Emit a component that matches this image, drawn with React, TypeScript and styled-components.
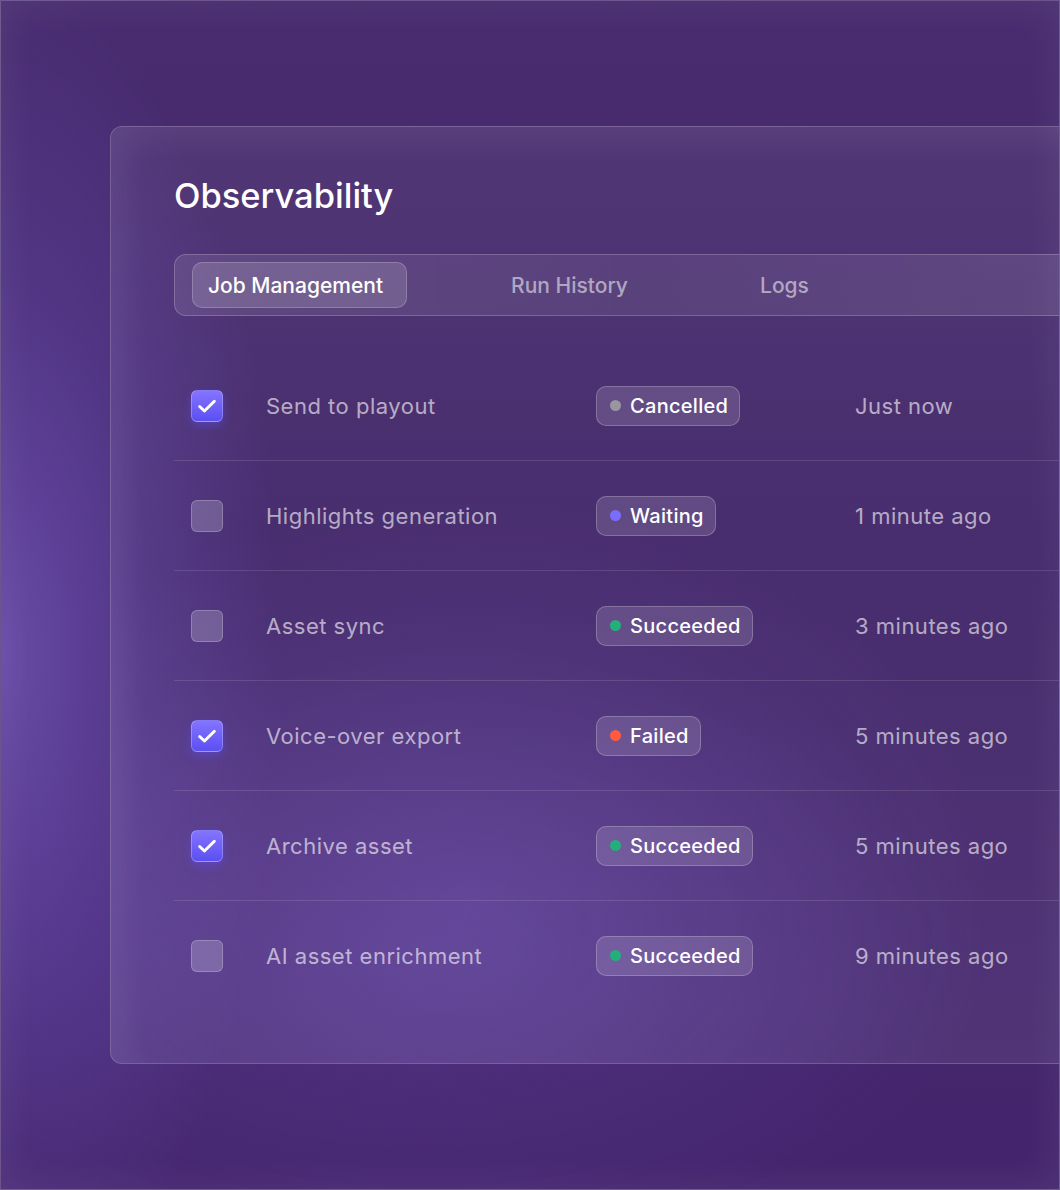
import React from 'react';
import styled, { createGlobalStyle } from 'styled-components';

const GlobalStyle = createGlobalStyle`
  html, body {
    margin: 0;
    padding: 0;
    background: #44266c;
  }
  body {
    font-family: Inter, 'Noto Sans', sans-serif;
  }
`;

const Frame = styled.div`
  width: 1060px;
  height: 1190px;
  box-sizing: border-box;
  overflow: hidden;
  border: 1px solid rgba(255, 255, 255, 0.22);
  padding: 125px 0 0 109px;
  background:
    radial-gradient(ellipse 280px 680px at 0% 55%, rgba(114, 84, 182, 0.8) 0%, rgba(100, 72, 168, 0.4) 55%, transparent 100%),
    radial-gradient(ellipse 560px 300px at 40% 80%, rgba(96, 66, 160, 0.45) 0%, transparent 100%),
    linear-gradient(180deg, #482c6f 0%, #42266a 50%, #44256d 100%);
  box-shadow: inset 0 0 40px rgba(255, 255, 255, 0.08);
`;

const Card = styled.div`
  width: 1000px;
  height: 938px;
  box-sizing: border-box;
  border: 1px solid rgba(255, 255, 255, 0.2);
  border-radius: 12px;
  padding: 48px 0 0 63px;
  background:
    radial-gradient(ellipse 520px 420px at 36% 84%, rgba(125, 95, 195, 0.3) 0%, transparent 100%),
    linear-gradient(180deg, rgba(255, 255, 255, 0.06) 0%, rgba(255, 255, 255, 0.03) 45%, rgba(255, 255, 255, 0.07) 100%);
  box-shadow: inset 16px 12px 30px rgba(255, 255, 255, 0.06);
`;

const Title = styled.h1`
  margin: 0;
  font-size: 34.5px;
  line-height: 42px;
  font-weight: 500;
  color: #ffffff;
`;

const TabBar = styled.div`
  margin-top: 37px;
  height: 62px;
  box-sizing: border-box;
  display: flex;
  align-items: center;
  padding-left: 17px;
  border: 1px solid rgba(255, 255, 255, 0.2);
  border-radius: 12px;
  background: linear-gradient(90deg, rgba(255, 255, 255, 0.1), rgba(255, 255, 255, 0.07) 50%, rgba(255, 255, 255, 0.1));
`;

const Tab = styled.div<{ $active?: boolean; $width: number; $gap: number }>`
  width: ${p => p.$width}px;
  margin-left: ${p => p.$gap}px;
  height: 46px;
  box-sizing: border-box;
  display: flex;
  align-items: center;
  justify-content: center;
  padding-right: ${p => (p.$active ? 8 : 0)}px;
  border-radius: 10px;
  font-size: 21px;
  font-weight: 500;
  color: ${p => (p.$active ? '#ffffff' : 'rgba(255, 255, 255, 0.55)')};
  border: 1px solid ${p => (p.$active ? 'rgba(255, 255, 255, 0.2)' : 'transparent')};
  background: ${p => (p.$active ? 'rgba(255, 255, 255, 0.14)' : 'transparent')};
`;

const Rows = styled.div`
  margin-top: 35px;
`;

const Row = styled.div<{ $last?: boolean }>`
  height: 110px;
  box-sizing: border-box;
  display: grid;
  grid-template-columns: 32px 373px 259px 1fr;
  align-items: center;
  padding-left: 17px;
  border-bottom: 1px solid ${p => (p.$last ? 'transparent' : 'rgba(255, 255, 255, 0.12)')};
`;

const Checkbox = styled.div<{ $checked?: boolean }>`
  width: 32px;
  height: 32px;
  box-sizing: border-box;
  border-radius: 6px;
  display: flex;
  align-items: center;
  justify-content: center;
  border: 1px solid ${p => (p.$checked ? 'rgba(255, 255, 255, 0.25)' : 'rgba(255, 255, 255, 0.22)')};
  background: ${p =>
    p.$checked ? 'linear-gradient(180deg, #8474ff 0%, #5b4ff2 100%)' : 'rgba(255, 255, 255, 0.2)'};
  box-shadow: ${p => (p.$checked ? '0 4px 10px rgba(90, 78, 240, 0.45)' : 'none')};
`;

const Name = styled.div`
  padding-left: 43px;
  font-size: 22px;
  letter-spacing: 0.5px;
  color: rgba(255, 255, 255, 0.62);
`;

const Badge = styled.div`
  justify-self: start;
  height: 40px;
  box-sizing: border-box;
  display: flex;
  align-items: center;
  gap: 9px;
  padding: 0 11px 0 13px;
  border-radius: 10px;
  border: 1px solid rgba(255, 255, 255, 0.22);
  background: rgba(255, 255, 255, 0.14);
  font-size: 20px;
  font-weight: 500;
  letter-spacing: 0.3px;
  color: #ffffff;
`;

const Dot = styled.span<{ $color: string }>`
  width: 11px;
  height: 11px;
  border-radius: 50%;
  background: ${p => p.$color};
`;

const Time = styled.div`
  font-size: 22px;
  letter-spacing: 0.5px;
  color: rgba(255, 255, 255, 0.62);
`;

const statusColors: Record<string, string> = {
  Cancelled: '#9a96a0',
  Waiting: '#7a6cff',
  Succeeded: '#22b07a',
  Failed: '#ff5a3c',
};

const jobs = [
  { name: 'Send to playout', status: 'Cancelled', time: 'Just now', checked: true },
  { name: 'Highlights generation', status: 'Waiting', time: '1 minute ago', checked: false },
  { name: 'Asset sync', status: 'Succeeded', time: '3 minutes ago', checked: false },
  { name: 'Voice-over export', status: 'Failed', time: '5 minutes ago', checked: true },
  { name: 'Archive asset', status: 'Succeeded', time: '5 minutes ago', checked: true },
  { name: 'AI asset enrichment', status: 'Succeeded', time: '9 minutes ago', checked: false },
];

const Check = () => (
  <svg width="22" height="22" viewBox="0 0 24 24" fill="none">
    <path d="M4 12.5l5.2 5L20 6.8" stroke="#ffffff" strokeWidth="3.2" strokeLinecap="round" strokeLinejoin="round" />
  </svg>
);

const App: React.FC = () => {
  return (
    <>
      <GlobalStyle />
      <Frame>
        <Card>
          <Title>Observability</Title>
          <TabBar>
            <Tab $active $width={215} $gap={0}>Job Management</Tab>
            <Tab $width={215} $gap={55}>Run History</Tab>
            <Tab $width={215} $gap={0}>Logs</Tab>
          </TabBar>
          <Rows>
            {jobs.map((job, i) => (
              <Row key={job.name} $last={i === jobs.length - 1}>
                <Checkbox $checked={job.checked}>{job.checked && <Check />}</Checkbox>
                <Name>{job.name}</Name>
                <Badge>
                  <Dot $color={statusColors[job.status]} />
                  {job.status}
                </Badge>
                <Time>{job.time}</Time>
              </Row>
            ))}
          </Rows>
        </Card>
      </Frame>
    </>
  );
};

export default App;
